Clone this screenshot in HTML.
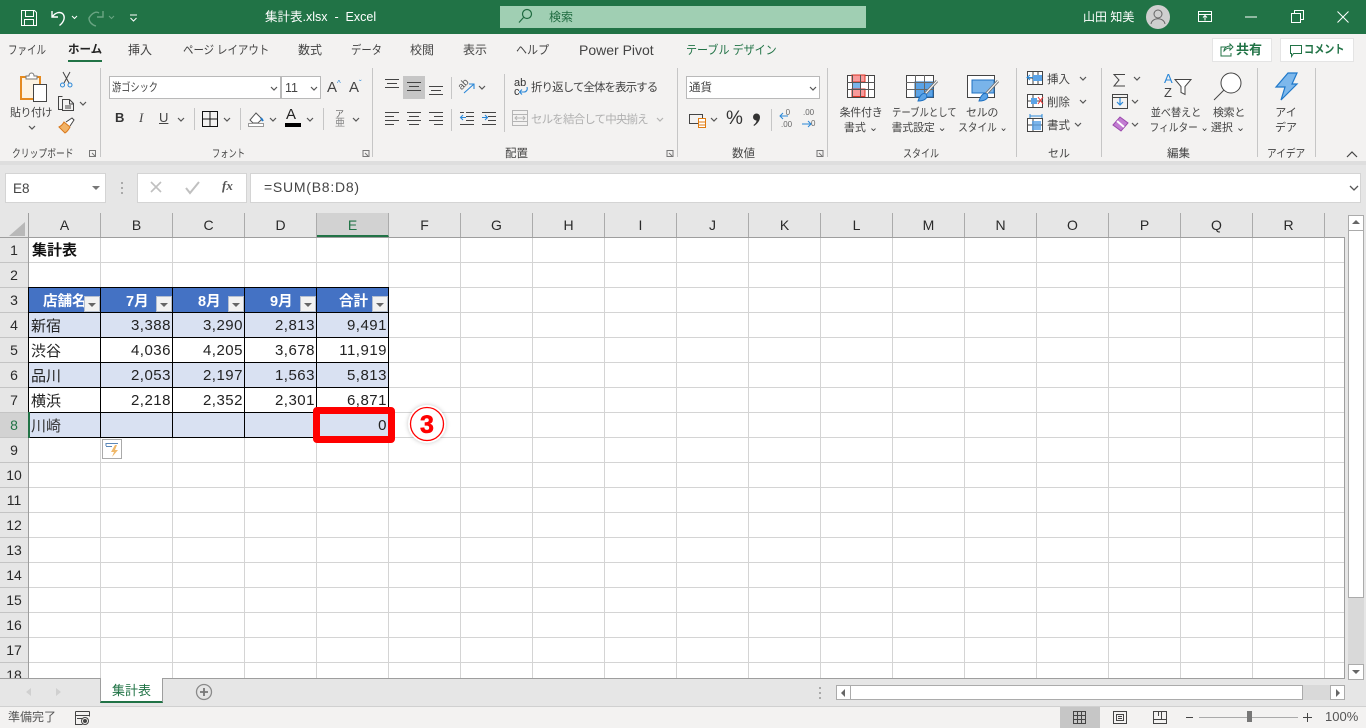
<!DOCTYPE html>
<html lang="ja"><head><meta charset="utf-8"><title>集計表.xlsx - Excel</title>
<style>
html,body{margin:0;padding:0}
body{width:1366px;height:728px;overflow:hidden;position:relative;background:#e6e6e6;font-family:"Liberation Sans","Noto Sans CJK JP",sans-serif;color:#333}
.a{position:absolute}
.t{position:absolute;white-space:nowrap;line-height:16px;font-size:12px;color:#444;transform-origin:left center}
.c{text-align:center;transform-origin:center center}
.g{color:#444;font-size:11.5px}
.h{position:absolute;top:213px;height:24px;line-height:24px;width:71px;text-align:center;font-size:14px;color:#2a2a2a;border-right:1px solid #ababab}
.r{position:absolute;left:0;width:28px;height:24px;line-height:24px;text-align:center;font-size:14px;color:#2a2a2a;border-bottom:1px solid #c4c4c4}
table{position:absolute;left:28px;top:287px;border-collapse:separate;border-spacing:0;table-layout:fixed;width:361px;border-left:1px solid #000;border-top:1px solid #000;font-size:15px;color:#222}
td{width:72px;height:25px;box-sizing:border-box;padding:0 1px 0 2px;border-right:1px solid #000;border-bottom:1px solid #000;text-align:right;letter-spacing:.5px;white-space:nowrap;overflow:hidden}
td:first-child{text-align:left;width:72px;letter-spacing:0;font-size:15px}
.b{background:#d9e1f2}
th{height:25px;box-sizing:border-box;background:#4472c4;color:#fff;font-size:14.5px;font-weight:700;text-align:left;border-right:1px solid #000;border-bottom:1px solid #000;padding:0;white-space:nowrap}
.f{position:absolute;top:296px;width:16px;height:16px;box-sizing:border-box;background:#f2f2f2;border:1px solid #b5bfd0}
.f:after{content:"";position:absolute;left:3px;top:6px;border:4px solid transparent;border-top:4px solid #666;border-bottom:0}
</style></head><body>
<div class="a" style="left:0;top:0;width:1366px;height:34px;background:#217346"></div>
<div class="a" style="left:0;top:34px;width:1366px;height:127px;background:#f3f2f1"></div>
<div class="a" style="left:0;top:161px;width:1366px;height:4px;background:#dedede"></div>
<div class="a" style="left:500px;top:6px;width:366px;height:22px;background:#a0cfb3"></div>

<svg class="a" style="left:0;top:0" width="1366" height="165" fill="none" stroke-width="1">
<defs><path id="ch" d="M0 0l3 3 3-3" stroke="#555" stroke-width="1.2" fill="none"/></defs>
<g stroke="#fff">
<path d="M21.5 10.5h13l2 2v13h-15zM25.5 10.5v6h8v-6M24.5 25.5v-6h9v6"/>
<path d="M52 11v6h6M52.5 16.5c3-4 7-5 10-3 3 3 2 8-3 12" stroke-width="1.4"/>
<path d="M72 16l2.500 2.500 2.500-2.500M130 15h7M130.500 18l3 3 3-3"/>
<path d="M1198.500 11.500h13v10h-13zM1198.500 14.500h13M1205 20.500v-5M1203 17.500l2-2 2 2"/>
<path d="M1245 17h12M1291.500 13.500h9v9h-9zM1294.500 13v-2.500h9v9h-2.500M1337.500 11.500l11 11M1348.500 11.500l-11 11"/>
</g>
<g stroke="#6aa583"><path d="M89 19l0-1c3-5 7-7 10-5M103 11v6h-6M96 26c-4-1-7-4-7-8" stroke-width="1.4"/><path d="M109 16l2.500 2.500 2.500-2.500"/></g>
<g stroke="#1f6b40"><circle cx="527" cy="14" r="4.500" stroke-width="1.200"/><path d="M523.500 17.500l-4.500 5" stroke-width="1.200"/></g>
<circle cx="1158" cy="17" r="12" fill="#cfcfcf"/>
<circle cx="1158" cy="14" r="4" stroke="#666"/><path d="M1151 24c1-7 13-7 14 0" stroke="#666"/>
<!-- tab underline -->
<rect x="68" y="60" width="34" height="2" fill="#217346"/>
<!-- share buttons -->
<rect x="1212.500" y="38.500" width="59" height="23" fill="#fff" stroke="#e4e4e4"/>
<rect x="1280.500" y="38.500" width="73" height="23" fill="#fff" stroke="#e4e4e4"/>
<path d="M1227 47h-6v9h10v-3M1224 51c0-3 3-5 6-5v-2l3 3-3 3v-2c-3 0-4 1-6 3z" stroke="#217346"/>
<path d="M1290.500 45.500h11v8h-8l-2 3v-3h-1z" stroke="#217346"/>
<!-- separators -->
<g stroke="#c6c6c6"><path d="M100.500 68v89M372.500 68v89M677.500 68v89M827.500 68v89M1016.500 68v89M1101.500 68v89M1257.500 68v89M1315.500 68v89"/>
<path d="M194.500 108v22M240.500 108v22M323.500 108v22M451.500 77v22M451.500 109v22M504.500 74v58M771.500 109v22"/></g>
<!-- paste -->
<path d="M21 77h19v22H21z" fill="#fdf3e2" stroke="#e58a1f" stroke-width="2"/>
<path d="M26 76h3c0-4 5-4 5 0h3v3H26z" fill="#fff" stroke="#777"/>
<rect x="33.500" y="84.500" width="13" height="17" fill="#fff" stroke="#444"/>
<!-- scissors -->
<g stroke="#444"><path d="M63 72l6 11M70 72l-6 11"/></g><g stroke="#2b88d8"><circle cx="62.500" cy="85" r="2"/><circle cx="70" cy="85" r="2"/></g>
<!-- copy -->
<g stroke="#444"><path d="M62.500 96.500h-4v13h4M62.500 99.500h7l4 4v7h-11zM69.500 100v4h4M65 106h6M65 108h6"/></g>
<!-- brush -->
<path d="M59 127l6 6c3-2 4-4 5-6l-6-5c-1 2-3 4-5 5z" fill="#f2b366" stroke="#d9781b"/><path d="M66 122l6-4 2 2-4 6" stroke="#444" fill="#fff"/>
<!-- inputs -->
<rect x="109.500" y="76.500" width="171" height="22" fill="#fff" stroke="#b9b9b9"/>
<rect x="281.500" y="76.500" width="39" height="22" fill="#fff" stroke="#b9b9b9"/>
<rect x="686.500" y="76.500" width="133" height="22" fill="#fff" stroke="#b9b9b9"/>
<!-- align -->
<rect x="403" y="76" width="22" height="23" fill="#c6c6c6"/>
<g stroke="#444">
<path d="M385 79.500h14M387 83.500h10M385 87.500h14"/>
<path d="M407 82.500h14M409 86.500h10M407 90.500h14"/>
<path d="M429 86.500h14M431 90.500h10M429 94.500h14"/>
<path d="M385 112.500h14M385 116.500h9M385 120.500h14M385 124.500h9"/>
<path d="M407 112.500h14M409 116.500h10M407 120.500h14M409 124.500h10"/>
<path d="M429 112.500h14M434 116.500h9M429 120.500h14M434 124.500h9"/>
<path d="M466 112.500h8M466 116.500h8M466 120.500h8M460 124.500h14M460 112.500h4M482 112.500h14M488 116.500h8M488 120.500h8M482 124.500h14"/>
</g>
<g stroke="#2b88d8" fill="none"><path d="M466 117.500h-5M463 115l-2.500 2.500 2.500 2.500M482 117.500h5M485 115l2.500 2.500-2.500 2.500M464 93l10-9M469 84h5v5" stroke-width="1.100"/>
<path d="M527 87c1 3-1 5-3 5h-4M522 89.500l-2.500 2.500 2.500 2.500" stroke-width="1.100"/></g>
<!-- merge -->
<g stroke="#b5b5b5"><rect x="512.500" y="110.500" width="15" height="15"/><path d="M512 114.500h16M512 121.500h16M515 118h10M517 116l-2 2 2 2M523 116l2 2-2 2"/></g>
<!-- currency -->
<rect x="689.500" y="114.500" width="13" height="9" stroke="#444"/><rect x="698.500" y="118.500" width="7" height="9" fill="#fff" stroke="#e07b10"/><path d="M698 122h8M698 125h8" stroke="#e07b10"/>
<path d="M753 117a3.500 3.500 0 1 1 7 0c0 4-3 7-6 9l-.5-1c2-1.500 3-3 3-4.500a3.500 3.500 0 0 1-3.500-3.500z" fill="#333"/>
<path d="M780 116h8M783 113l-3 3 3 3M802 124h9M808 121l3 3-3 3" stroke="#2b88d8"/>
<!-- style icons -->
<g transform="translate(0,-3)">
<g stroke="#444"><rect x="847.500" y="78.500" width="27" height="22" fill="#fff"/></g>
<rect x="852" y="78" width="13" height="7" fill="#f89a9a" stroke="#d32"/><rect x="852" y="85" width="8" height="7" fill="#79b4ea"/><rect x="852" y="92" width="13" height="7.500" fill="#f89a9a" stroke="#d32"/>
<path d="M852.500 78v22M860.500 78v22M868.500 78v22M847 85.500h28M847 92.500h28" stroke="#555"/>
<rect x="906.500" y="78.500" width="27" height="22" fill="#fff" stroke="#444"/><rect x="915" y="85" width="18" height="15" fill="#5ba3e6" stroke="#1e70c1"/><path d="M915.500 78v22M924.500 78v22M906 85.500h28M906 92.500h28" stroke="#666"/>
<path d="M937 84l-12 13" stroke="#777" stroke-width="3"/><path d="M937 84l-12 13" stroke="#fff" stroke-width="1"/><path d="M918 104c2-6 5-9 8-7 2 3 0 7-8 7z" fill="#5ba3e6" stroke="#1e70c1"/>
<rect x="967.500" y="78.500" width="27" height="22" fill="#fff" stroke="#444"/><rect x="972" y="83" width="22" height="13" fill="#79b4ea" stroke="#1e70c1"/>
<path d="M998 84l-12 13" stroke="#777" stroke-width="3"/><path d="M998 84l-12 13" stroke="#fff" stroke-width="1"/><path d="M979 104c2-6 5-9 8-7 2 3 0 7-8 7z" fill="#5ba3e6" stroke="#1e70c1"/>
</g>
<!-- cell icons -->
<g stroke="#444"><rect x="1027.500" y="71.500" width="15" height="13" fill="#fff"/><path d="M1027 78h16M1033 71v13M1038 71v13"/>
<rect x="1027.500" y="94.500" width="15" height="13" fill="#fff"/><path d="M1027 101h16M1033 94v13"/>
<rect x="1027.500" y="118.500" width="15" height="13" fill="#fff"/><path d="M1027 125h16M1033 118v13"/></g>
<rect x="1033" y="75" width="9" height="6" fill="#5ba3e6"/><path d="M1027 77.500h6M1030 75l-3 2.500 3 2.500" stroke="#2b88d8"/>
<rect x="1031" y="98" width="6" height="6" fill="#5ba3e6"/><path d="M1038 97l5 7M1043 97l-5 7" stroke="#e33"/>
<rect x="1032" y="121" width="9" height="9" fill="#5ba3e6" opacity=".8"/><path d="M1030 116h12M1030 114v4M1042 114v4" stroke="#2b88d8"/>
<!-- edit icons -->
<path d="M1125 74.500h-11l5 5.500-5 6h11" stroke="#444"/>
<rect x="1112.500" y="94.500" width="15" height="14" stroke="#444"/><path d="M1120 97v8M1117 102l3 3 3-3" stroke="#2b88d8" stroke-width="1.200"/><path d="M1112 97.500h16" stroke="#444"/>
<path d="M1113 125l7-8 8 6-7 8z" fill="#c27cd2" stroke="#9b4aad"/><path d="M1117 121l7 6" stroke="#fff" stroke-width="2"/>
<path d="M1175 79.500h16l-6 7v8l-4-2v-6z" fill="#fff" stroke="#444"/>
<circle cx="1231" cy="83" r="10" fill="#fff" stroke="#444"/><path d="M1224 90l-10 10" stroke="#444"/>
<path d="M1288 73h9l-5 11h5l-16 16 4-13h-9z" fill="#7db8ec" stroke="#1f78c9" stroke-width="1.200"/>
<!-- dialog launchers -->
<g stroke="#777"><path d="M89.500 150.500h6v6h-6zM92 153l3 3M363 150.500h6v6h-6zM365 153l3 3M667 150.500h6v6h-6zM669 153l3 3M817 150.500h6v6h-6zM819 153l3 3"/></g>
<path d="M1347 157l5-5 5 5" stroke="#444" stroke-width="1.200"/>
<!-- chevrons -->
<use href="#ch" x="29" y="126"/><use href="#ch" x="80" y="102"/><use href="#ch" x="271" y="87"/><use href="#ch" x="311" y="87"/>
<use href="#ch" x="178" y="118"/><use href="#ch" x="224" y="118"/><use href="#ch" x="270" y="118"/><use href="#ch" x="307" y="118"/><use href="#ch" x="353" y="118"/>
<use href="#ch" x="479" y="86"/><use href="#ch" x="810" y="87"/><use href="#ch" x="711" y="118"/>
<use href="#ch" x="1080" y="77"/><use href="#ch" x="1080" y="100"/><use href="#ch" x="1075" y="123"/>
<use href="#ch" x="1134" y="77"/><use href="#ch" x="1132" y="100"/><use href="#ch" x="1132" y="123"/>
<use href="#ch" x="657" y="118" opacity=".4"/>
<!-- border button -->
<path d="M202.500 111.500h15v15h-15zM210 111v15M202 119h16" stroke="#111"/>
<!-- fill -->
<path d="M250 120l6-7 6 6-4 4h-5z" fill="#fff" stroke="#555"/><path d="M261 118l2 3" stroke="#1f78c9" stroke-width="2"/><rect x="248.500" y="123.500" width="15" height="3" fill="#fff" stroke="#999"/>
<rect x="285" y="123" width="16" height="4" fill="#000"/>
</svg>

<span class="t" style="left:265px;top:9px;color:#fff;font-size:12.5px">集計表.xlsx &nbsp;-&nbsp; Excel</span>
<span class="t" style="left:549px;top:9px;color:#1f6b40;font-size:12px">検索</span>
<span class="t" style="left:1083px;top:9px;color:#fff;font-size:12px">山田 知美</span>

<span class="t" style="left:8px;top:42px;transform:scaleX(.79)">ファイル</span>
<span class="t" style="left:68px;top:42px;font-weight:700;color:#222;font-size:11.5px">ホーム</span>
<span class="t" style="left:128px;top:42px">挿入</span>
<span class="t" style="left:183px;top:42px;transform:scaleX(.87)">ページ レイアウト</span>
<span class="t" style="left:298px;top:42px">数式</span>
<span class="t" style="left:351px;top:42px;transform:scaleX(.86)">データ</span>
<span class="t" style="left:410px;top:42px">校閲</span>
<span class="t" style="left:463px;top:42px">表示</span>
<span class="t" style="left:516px;top:42px;transform:scaleX(.92)">ヘルプ</span>
<span class="t" style="left:579px;top:42px;font-size:14px">Power Pivot</span>
<span class="t" style="left:686px;top:42px;color:#217346;transform:scaleX(.92)">テーブル デザイン</span>
<span class="t" style="left:1236px;top:42px;font-weight:700;color:#217346;font-size:13px">共有</span>
<span class="t" style="left:1304px;top:42px;font-weight:700;color:#217346;font-size:11.500px;transform:scaleX(.88)">コメント</span>

<span class="t" style="left:10px;top:105px;font-size:11px;letter-spacing:-.5px">貼り付け</span>
<span class="t" style="left:112px;top:80px;font-size:11.500px;transform:scaleX(.8)">游ゴシック</span>
<span class="t" style="left:285px;top:80px;font-size:12.500px">11</span>
<span class="t" style="left:327px;top:80px;font-size:15px">A<sup style="font-size:8px;color:#2b88d8;line-height:0">^</sup></span>
<span class="t" style="left:349px;top:80px;font-size:15px">A<sup style="font-size:8px;color:#2b88d8;line-height:0">ˇ</sup></span>
<span class="t" style="left:115px;top:110px;font-weight:700;font-size:13px;color:#333">B</span>
<span class="t" style="left:139px;top:110px;font-style:italic;font-size:13px;font-family:'Liberation Serif',serif">I</span>
<span class="t" style="left:159px;top:110px;text-decoration:underline;font-size:13px">U</span>
<span class="t" style="left:286px;top:107px;font-size:15px;color:#222">A</span>
<span class="t" style="left:335px;top:106px;font-size:9px;color:#666">ア</span>
<span class="t" style="left:335px;top:116px;font-size:10px;color:#888">亜</span>
<span class="t c" style="left:457px;top:77px;width:14px;font-size:10px;color:#555;transform:rotate(-45deg)">ab</span>
<span class="t" style="left:514px;top:75px;font-size:11px;color:#333">ab</span>
<span class="t" style="left:514px;top:84px;font-size:11px;color:#333">c</span>
<span class="t" style="left:531px;top:80px;font-size:11.500px;letter-spacing:-.95px">折り返して全体を表示する</span>
<span class="t" style="left:531px;top:112px;font-size:11.500px;color:#b0b0b0;letter-spacing:-.85px">セルを結合して中央揃え</span>
<span class="t" style="left:689px;top:80px;font-size:11.500px">通貨</span>
<span class="t" style="left:726px;top:111px;font-size:19px;color:#333">%</span>
<span class="t" style="left:779px;top:109px;font-size:8px;line-height:8px;color:#666">&nbsp;&nbsp;&nbsp;0</span>
<span class="t" style="left:781px;top:121px;font-size:8px;line-height:8px;color:#666">.00</span>
<span class="t" style="left:803px;top:109px;font-size:8px;line-height:8px;color:#666">.00</span>
<span class="t" style="left:811px;top:120px;font-size:8px;line-height:8px;color:#666">0</span>

<span class="t c" style="left:838px;top:105px;width:46px;font-size:11px;letter-spacing:-.3px">条件付き</span>
<span class="t c" style="left:835px;top:120px;width:52px;font-size:11px">書式 ⌄</span>
<span class="t c" style="left:887px;top:105px;width:67px;font-size:11px;transform:scaleX(.85)">テーブルとして</span>
<span class="t c" style="left:887px;top:120px;width:64px;font-size:11px;letter-spacing:-.2px">書式設定 ⌄</span>
<span class="t c" style="left:962px;top:105px;width:40px;font-size:11px;letter-spacing:-.3px">セルの</span>
<span class="t c" style="left:955px;top:120px;width:52px;font-size:11px;transform:scaleX(.88)">スタイル ⌄</span>
<span class="t" style="left:1047px;top:72px;font-size:11.500px">挿入</span>
<span class="t" style="left:1047px;top:95px;font-size:11.500px">削除</span>
<span class="t" style="left:1047px;top:118px;font-size:11.500px">書式</span>
<span class="t" style="left:1164px;top:71px;font-size:13px;color:#2b88d8">A</span>
<span class="t" style="left:1164px;top:85px;font-size:13px;color:#444">Z</span>
<span class="t c" style="left:1148px;top:105px;width:56px;font-size:11px;transform:scaleX(.92)">並べ替えと</span>
<span class="t c" style="left:1146px;top:120px;width:60px;font-size:11px;transform:scaleX(.88)">フィルター ⌄</span>
<span class="t c" style="left:1209px;top:105px;width:40px;font-size:11px;letter-spacing:-.3px">検索と</span>
<span class="t c" style="left:1206px;top:120px;width:44px;font-size:11px">選択 ⌄</span>
<span class="t c" style="left:1266px;top:105px;width:40px;font-size:11px">アイ</span>
<span class="t c" style="left:1266px;top:120px;width:40px;font-size:11px">デア</span>

<span class="t g" style="left:12px;top:146px;font-size:11px;transform:scaleX(.8)">クリップボード</span>
<span class="t g" style="left:212px;top:146px;font-size:11px;transform:scaleX(.75)">フォント</span>
<span class="t g" style="left:505px;top:146px">配置</span>
<span class="t g" style="left:732px;top:146px">数値</span>
<span class="t g" style="left:903px;top:146px;font-size:11px;transform:scaleX(.82)">スタイル</span>
<span class="t g" style="left:1048px;top:146px;font-size:11px">セル</span>
<span class="t g" style="left:1167px;top:146px">編集</span>
<span class="t g" style="left:1267px;top:146px;font-size:11px;transform:scaleX(.88)">アイデア</span>

<!-- formula bar -->
<div class="a" style="left:5px;top:173px;width:101px;height:30px;box-sizing:border-box;background:#fff;border:1px solid #d4d4d4"></div>
<span class="t" style="left:13px;top:181px;font-size:13.500px;color:#444">E8</span>
<div class="a" style="left:92px;top:186px;border:4px solid transparent;border-top:4px solid #777;border-bottom:0"></div>
<svg class="a" style="left:118px;top:180px" width="8" height="16"><g fill="#aaa"><rect x="3" y="2" width="2" height="2"/><rect x="3" y="7" width="2" height="2"/><rect x="3" y="12" width="2" height="2"/></g></svg>
<div class="a" style="left:137px;top:173px;width:110px;height:30px;box-sizing:border-box;background:#fff;border:1px solid #d4d4d4"></div>
<svg class="a" style="left:137px;top:173px" width="110" height="30" fill="none"><path d="M14 9l10 10M24 9L14 19" stroke="#c0c0c0" stroke-width="1.600"/><path d="M49 15l4 5 9-11" stroke="#c0c0c0" stroke-width="2"/></svg>
<span class="t" style="left:222px;top:178px;font-family:'Liberation Serif',serif;font-style:italic;font-weight:700;font-size:13px;color:#555">fx</span>
<div class="a" style="left:250px;top:173px;width:1111px;height:30px;box-sizing:border-box;background:#fff;border:1px solid #d4d4d4"></div>
<span class="t" style="left:264px;top:179px;font-size:14px;color:#444;letter-spacing:.75px">=SUM(B8:D8)</span>
<svg class="a" style="left:1349px;top:184px" width="10" height="8" fill="none"><path d="M1 2l4 4 4-4" stroke="#555" stroke-width="1.300"/></svg>

<!-- corner -->
<svg class="a" style="left:0;top:213px" width="29" height="25"><path d="M25 9v14H9z" fill="#b8b8b8"/></svg>
<div class="a" style="left:28px;top:213px;width:1px;height:465px;background:#9e9e9e"></div>
<div class="a" style="left:0;top:237px;width:1345px;height:1px;background:#9e9e9e"></div>

<!-- column headers -->
<div class="h" style="left:29px">A</div><div class="h" style="left:101px">B</div><div class="h" style="left:173px">C</div><div class="h" style="left:245px">D</div>
<div class="h" style="left:317px;background:#d2d2d2;color:#217346;height:22px;line-height:24px;border-bottom:2px solid #217346">E</div>
<div class="h" style="left:389px">F</div><div class="h" style="left:461px">G</div><div class="h" style="left:533px">H</div><div class="h" style="left:605px">I</div><div class="h" style="left:677px">J</div><div class="h" style="left:749px">K</div><div class="h" style="left:821px">L</div><div class="h" style="left:893px">M</div><div class="h" style="left:965px">N</div><div class="h" style="left:1037px">O</div><div class="h" style="left:1109px">P</div><div class="h" style="left:1181px">Q</div><div class="h" style="left:1253px">R</div>

<!-- grid -->
<div class="a" style="left:29px;top:238px;width:1316px;height:440px;background-color:#fff;background-image:linear-gradient(to right,transparent 71px,#d4d4d4 71px),linear-gradient(to bottom,transparent 24px,#d4d4d4 24px);background-size:72px 25px"></div>
<div class="a" style="left:1344px;top:238px;width:1px;height:440px;background:#9e9e9e"></div>
<div class="a" style="left:1324px;top:213px;width:1px;height:25px;background:#ababab"></div>

<!-- row headers -->
<div class="r" style="top:238px">1</div><div class="r" style="top:263px">2</div><div class="r" style="top:288px">3</div><div class="r" style="top:313px">4</div><div class="r" style="top:338px">5</div><div class="r" style="top:363px">6</div><div class="r" style="top:388px">7</div>
<div class="r" style="top:413px;background:#d2d2d2;color:#217346">8</div>
<div class="r" style="top:438px">9</div><div class="r" style="top:463px">10</div><div class="r" style="top:488px">11</div><div class="r" style="top:513px">12</div><div class="r" style="top:538px">13</div><div class="r" style="top:563px">14</div><div class="r" style="top:588px">15</div><div class="r" style="top:613px">16</div><div class="r" style="top:638px">17</div>
<div class="r" style="top:663px;height:15px;overflow:hidden;border-bottom:0">18</div>

<span class="t" style="left:32px;top:243px;font-size:15px;font-weight:700;color:#111">集計表</span>

<table>
<tr><th style="width:72px;padding-left:14px">店舗名</th><th style="padding-left:25px;width:72px">7月</th><th style="padding-left:25px;width:72px">8月</th><th style="padding-left:25px;width:72px">9月</th><th style="padding-left:22px;width:72px">合計</th></tr>
<tr class="b"><td>新宿</td><td>3,388</td><td>3,290</td><td>2,813</td><td>9,491</td></tr>
<tr><td>渋谷</td><td>4,036</td><td>4,205</td><td>3,678</td><td>11,919</td></tr>
<tr class="b"><td>品川</td><td>2,053</td><td>2,197</td><td>1,563</td><td>5,813</td></tr>
<tr><td>横浜</td><td>2,218</td><td>2,352</td><td>2,301</td><td>6,871</td></tr>
<tr class="b"><td style="color:#333">川崎</td><td></td><td></td><td></td><td style="padding-right:1px">0</td></tr>
</table>
<div class="a" style="left:28px;top:412px;width:2px;height:26px;background:#217346"></div>
<div class="f" style="left:84px"></div><div class="f" style="left:156px"></div><div class="f" style="left:228px"></div><div class="f" style="left:300px"></div><div class="f" style="left:372px"></div>

<!-- red box -->
<div class="a" style="left:313px;top:407px;width:82px;height:36px;box-sizing:border-box;border:7px solid #f00;border-radius:4px"></div>
<!-- flash fill -->
<div class="a" style="left:102px;top:439px;width:20px;height:20px;box-sizing:border-box;background:#fff;border:1px solid #aaa"></div>
<svg class="a" style="left:102px;top:439px" width="20" height="20" fill="none"><path d="M4 4.500h12M4 4v3M4 7.500h6" stroke="#5b87b8"/><path d="M13 6l-4 7h3l-2 5 6-7h-3l2-5z" fill="#efb86a"/></svg>
<!-- circled 3 -->
<svg class="a" style="left:404px;top:401px;overflow:visible" width="46" height="46" fill="none">
<circle cx="23" cy="23" r="19" fill="#fff" style="filter:drop-shadow(0 0 2px rgba(0,0,0,.22))"/>
<circle cx="23" cy="23" r="16.500" stroke="#f00" stroke-width="1.300"/>
<text x="23" y="32" text-anchor="middle" font-family="Liberation Sans" font-weight="700" font-size="25" fill="#f00" stroke="#f00" stroke-width=".6">3</text>
</svg>

<!-- vertical scrollbar -->
<div class="a" style="left:1345px;top:213px;width:21px;height:493px;background:#e6e6e6"></div>
<div class="a" style="left:1348px;top:230px;width:16px;height:434px;background:#d9d9d9"></div>
<div class="a" style="left:1348px;top:215px;width:16px;height:16px;box-sizing:border-box;background:#fff;border:1px solid #ababab"></div>
<div class="a" style="left:1352px;top:220px;border:4px solid transparent;border-bottom:4px solid #666;border-top:0"></div>
<div class="a" style="left:1348px;top:230px;width:16px;height:368px;box-sizing:border-box;background:#fff;border:1px solid #ababab"></div>
<div class="a" style="left:1348px;top:664px;width:16px;height:16px;box-sizing:border-box;background:#fff;border:1px solid #ababab"></div>
<div class="a" style="left:1352px;top:670px;border:4px solid transparent;border-top:4px solid #666;border-bottom:0"></div>

<!-- tab bar -->
<div class="a" style="left:0;top:678px;width:1345px;height:28px;background:#e6e6e6;border-top:1px solid #9e9e9e;box-sizing:border-box"></div>
<div class="a" style="left:100px;top:678px;width:63px;height:25px;box-sizing:border-box;background:#fff;border-left:1px solid #9e9e9e;border-right:1px solid #9e9e9e;border-bottom:2px solid #217346"></div>
<span class="t" style="left:112px;top:683px;font-size:13px;color:#217346">集計表</span>
<svg class="a" style="left:0;top:680px" width="220" height="24" fill="none"><path d="M31 8l-5 4 5 4z" fill="#d0d0d0"/><path d="M56 8l5 4-5 4z" fill="#d0d0d0"/><circle cx="204" cy="12" r="7.500" stroke="#8a8a8a" stroke-width="1.300"/><path d="M200 12h8M204 8v8" stroke="#777" stroke-width="1.800"/></svg>
<svg class="a" style="left:816px;top:685px" width="8" height="16"><g fill="#aaa"><rect x="3" y="2" width="2" height="2"/><rect x="3" y="7" width="2" height="2"/><rect x="3" y="12" width="2" height="2"/></g></svg>
<div class="a" style="left:836px;top:685px;width:509px;height:15px;background:#d9d9d9"></div>
<div class="a" style="left:836px;top:685px;width:467px;height:15px;box-sizing:border-box;background:#fff;border:1px solid #ababab"></div>
<div class="a" style="left:836px;top:685px;width:15px;height:15px;box-sizing:border-box;background:#fff;border:1px solid #ababab"></div>
<div class="a" style="left:841px;top:689px;border:4px solid transparent;border-right:4px solid #666;border-left:0"></div>
<div class="a" style="left:1330px;top:685px;width:15px;height:15px;box-sizing:border-box;background:#fff;border:1px solid #ababab"></div>
<div class="a" style="left:1336px;top:689px;border:4px solid transparent;border-left:4px solid #666;border-right:0"></div>

<!-- status bar -->
<div class="a" style="left:0;top:706px;width:1366px;height:22px;background:#f3f2f1;border-top:1px solid #d0d0d0;box-sizing:border-box"></div>
<span class="t" style="left:8px;top:709px;font-size:12px;color:#555">準備完了</span>
<div class="a" style="left:1060px;top:707px;width:40px;height:21px;background:#c6c6c6"></div>
<svg class="a" style="left:0;top:706px" width="1366" height="22" fill="none" stroke="#444">
<path d="M75.500 5.500h14M75.500 5.500v13h7M75 9.500h14M77 12.500h5M89.500 5.500v5"/><circle cx="85" cy="15" r="3.500"/><circle cx="85" cy="15" r="1.500" fill="#444"/>
<path d="M1073.500 5.500h12v12h-12zM1077.500 5v13M1081.500 5v13M1073 9.500h13M1073 13.500h13"/>
<path d="M1113.500 5.500h13v12h-13zM1116.500 8.500h7v6h-7zM1118 10.500h4M1118 12.500h4"/>
<path d="M1153.500 5.500h13v12h-13zM1153 13.500h13M1158.500 5v5M1161.500 5v8"/>
<path d="M1186 11.500h7M1303 11.500h9M1307.500 7v9"/><path d="M1199 11.500h99" stroke="#aaa"/></svg>
<div class="a" style="left:1247px;top:711px;width:5px;height:11px;background:#777"></div>
<span class="t" style="left:1325px;top:709px;font-size:13px;color:#555">100%</span>
</body></html>
